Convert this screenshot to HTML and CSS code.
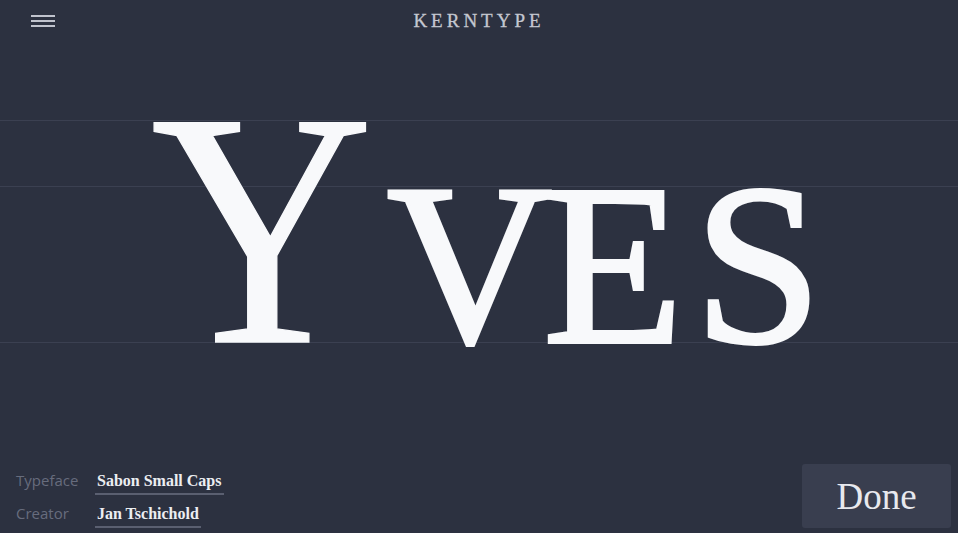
FILE: index.html
```html
<!DOCTYPE html>
<html lang="en">
<head>
<meta charset="utf-8">
<title>Kerntype</title>
<link rel="stylesheet" href="styles.css">
</head>
<body>
<div class="app">
  <header class="topbar">
    <button class="menu" aria-label="Menu">
      <span class="bar"></span><span class="bar"></span><span class="bar"></span>
    </button>
    <h1 class="brand">KERNTYPE</h1>
    <div class="spacer"></div>
  </header>
  <main class="stage">
    <div class="word"><span class="glyph g-y">Y</span><span class="sc"><span class="glyph g-v">v</span><span class="glyph g-e">e</span><span class="glyph g-s">s</span></span></div>
  </main>
  <footer class="footer">
    <dl class="meta">
      <dt class="label">Typeface</dt>
      <dd class="value"><span class="val">Sabon Small Caps</span></dd>
      <dt class="label">Creator</dt>
      <dd class="value"><span class="val">Jan Tschichold</span></dd>
    </dl>
    <button class="done">Done</button>
  </footer>
</div>
</body>
</html>
```

FILE: styles.css
```css
* { box-sizing: border-box; }
html, body { margin: 0; padding: 0; }
body {
  background: #2c3140;
  width: 958px;
  height: 533px;
  overflow: hidden;
  font-family: "Liberation Serif", serif;
}
.app {
  display: flex;
  flex-direction: column;
  height: 533px;
}
.topbar {
  height: 42px;
  display: grid;
  grid-template-columns: 1fr auto 1fr;
  align-items: start;
}
.menu {
  justify-self: start;
  margin: 15px 0 0 31px;
  padding: 0;
  border: 0;
  background: none;
  width: 24px;
  display: flex;
  flex-direction: column;
  gap: 3px;
  cursor: pointer;
}
.bar {
  display: block;
  width: 24px;
  height: 2px;
  background: #c0c3cd;
}
.brand {
  margin: 9px 0 0 0;
  padding-left: 0;
  font-family: "Liberation Serif", serif;
  font-weight: normal;
  font-size: 19px;
  line-height: 24px;
  letter-spacing: 4px;
  color: #c4c7d0;
  -webkit-text-stroke: 0.3px #c4c7d0;
}
.stage {
  flex: 1;
  background:
    linear-gradient(#3b4051, #3b4051) 0 78px / 100% 1px no-repeat,
    linear-gradient(#3b4051, #3b4051) 0 144px / 100% 1px no-repeat,
    linear-gradient(#3b4051, #3b4051) 0 300px / 100% 1px no-repeat;
}
.word {
  margin-top: 19px;
  padding-left: 141px;
  font-size: 335px;
  line-height: 1;
  white-space: nowrap;
  color: #f8f9fb;
}
.g-y {
  display: inline-block;
  transform: scaleX(0.92);
  -webkit-text-stroke: 1.5px #f8f9fb;
}
.sc {
  font-size: 0.975em;
  font-variant: small-caps;
  -webkit-text-stroke: 4px #f8f9fb;
}
.g-v { margin-left: 4px; }
.g-e { margin-left: -9px; }
.g-s { margin-left: 11px; }
.footer {
  display: flex;
  justify-content: space-between;
  align-items: flex-end;
  padding: 0 7px 5px 16px;
}
.meta {
  margin: 0 0 0 0;
  display: grid;
  grid-template-columns: 79px auto;
  row-gap: 5px;
  align-items: baseline;
}
.label {
  font-family: "Open Sans", sans-serif;
  font-size: 15px;
  color: #676c7d;
  line-height: 26px;
}
.value {
  margin: 0;
  line-height: 24px;
}
.val {
  display: inline-block;
  padding: 0 2px;
  border-bottom: 2px solid #5a5f70;
  font-family: "Liberation Serif", serif;
  font-weight: bold;
  font-size: 16px;
  color: #eceef2;
}
.done {
  width: 149px;
  height: 64px;
  border: 0;
  border-radius: 3px;
  background: #393e4f;
  color: #e8e9ee;
  font-family: "Liberation Serif", serif;
  font-size: 37px;
  padding: 0;
  cursor: pointer;
}
```
